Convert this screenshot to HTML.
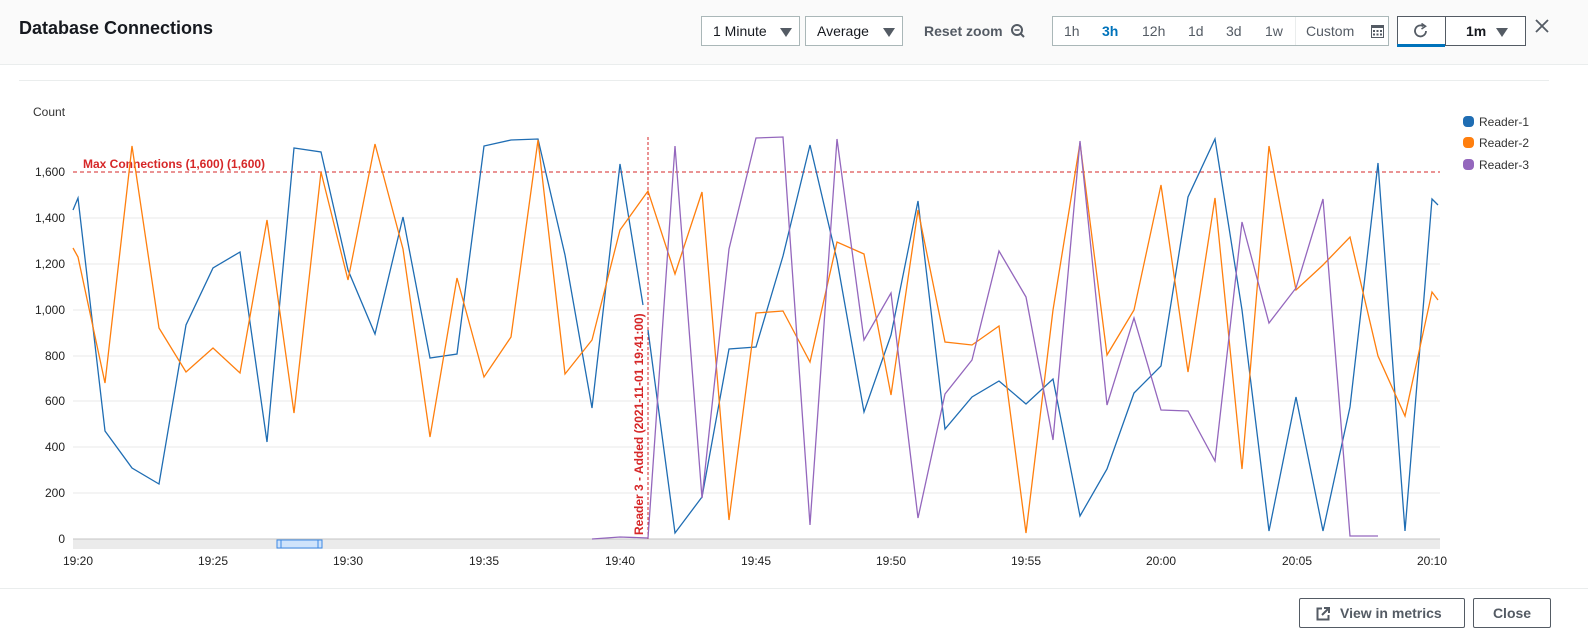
<!DOCTYPE html>
<html><head><meta charset="utf-8"><style>
*{box-sizing:border-box;margin:0;padding:0}
body{width:1588px;height:642px;background:#fff;font-family:"Liberation Sans",Arial,sans-serif;position:relative;overflow:hidden;color:#16191f}
.hdr{position:absolute;left:0;top:0;width:1588px;height:65px;background:#fafafa;border-bottom:1px solid #eaeded}
.t{position:absolute;left:19px;top:18px;font-size:18px;font-weight:bold}
.b{position:absolute;border:1px solid #aab7b8;background:#fff;height:30px;top:16px;font-size:14px;line-height:28px;color:#16191f}
.tri{position:absolute;top:11px;width:0;height:0;border-left:6px solid transparent;border-right:6px solid transparent;border-top:9px solid #545b64}
.seg{position:absolute;top:0;font-size:14px;line-height:28px;color:#545b64}
.foot{position:absolute;left:0;top:588px;width:1588px;border-top:1px solid #eaeded}
.fb{position:absolute;top:598px;height:30px;border:1px solid #545b64;border-radius:2px;font-size:14px;font-weight:bold;line-height:28px;color:#545b64;text-align:center}
</style></head><body>
<div class="hdr">
<div class="t">Database Connections</div>
<div class="b" style="left:701px;width:99px"><span style="position:absolute;left:11px">1 Minute</span><span class="tri" style="left:78px"></span></div>
<div class="b" style="left:805px;width:98px"><span style="position:absolute;left:11px">Average</span><span class="tri" style="left:77px"></span></div>
<div style="position:absolute;left:924px;top:23px;font-size:14px;font-weight:bold;color:#545b64">Reset zoom</div>
<svg style="position:absolute;left:1010px;top:23px" width="16" height="16"><circle cx="7" cy="7" r="5" fill="none" stroke="#545b64" stroke-width="2"/><line x1="4.5" y1="7" x2="9.5" y2="7" stroke="#545b64" stroke-width="1.6"/><line x1="10.5" y1="10.5" x2="14" y2="14" stroke="#545b64" stroke-width="2"/></svg>
<div class="b" style="left:1052px;width:337px">
<span class="seg" style="left:11px">1h</span>
<span class="seg" style="left:49px;color:#0073bb;font-weight:bold">3h</span>
<span class="seg" style="left:89px">12h</span>
<span class="seg" style="left:135px">1d</span>
<span class="seg" style="left:173px">3d</span>
<span class="seg" style="left:212px">1w</span>
<span style="position:absolute;left:242px;top:0;height:28px;border-left:1px solid #eaeded"></span>
<span class="seg" style="left:253px">Custom</span>
<svg style="position:absolute;left:318px;top:8px" width="13" height="13"><rect x="0.5" y="0.5" width="12" height="12" fill="none" stroke="#545b64"/><rect x="0" y="0" width="13" height="3" fill="#545b64"/><g fill="#545b64"><rect x="2" y="5" width="2" height="2"/><rect x="5.5" y="5" width="2" height="2"/><rect x="9" y="5" width="2" height="2"/><rect x="2" y="8.5" width="2" height="2"/><rect x="5.5" y="8.5" width="2" height="2"/><rect x="9" y="8.5" width="2" height="2"/></g></svg>
</div>
<div class="b" style="left:1397px;width:129px;border-color:#545b64">
<span style="position:absolute;left:47px;top:0;height:28px;border-left:1px solid #545b64"></span>
<svg style="position:absolute;left:15px;top:6px" width="16" height="16"><path d="M13 8 A5.5 5.5 0 1 1 10.5 3.3" fill="none" stroke="#545b64" stroke-width="1.8"/><path d="M8.5 0.5 L12.5 3.3 L8.5 6" fill="none" stroke="#545b64" stroke-width="1.6"/></svg>
<span style="position:absolute;left:68px;font-weight:bold">1m</span><span class="tri" style="left:98px"></span>
<span style="position:absolute;left:-1px;bottom:-2px;width:48px;height:3px;background:#0073bb"></span>
</div>
<svg style="position:absolute;left:1534px;top:18px" width="16" height="16"><path d="M2 2 L14 14 M14 2 L2 14" stroke="#545b64" stroke-width="1.8"/></svg>
</div>
<div style="position:absolute;left:19px;top:80px;width:1530px;border-top:1px solid #eaeded"></div>
<svg style="position:absolute;left:0;top:0" width="1588" height="642" font-family="Liberation Sans,Arial,sans-serif">
<text x="33" y="116" font-size="12" fill="#333">Count</text>
<g stroke="#e9e9e9" stroke-width="1">
<line x1="73" y1="218" x2="1440" y2="218"/><line x1="73" y1="264" x2="1440" y2="264"/><line x1="73" y1="310" x2="1440" y2="310"/><line x1="73" y1="356" x2="1440" y2="356"/><line x1="73" y1="401" x2="1440" y2="401"/><line x1="73" y1="447" x2="1440" y2="447"/><line x1="73" y1="493" x2="1440" y2="493"/>
</g>
<g font-size="12" fill="#222" text-anchor="end">
<text x="65" y="176">1,600</text><text x="65" y="222">1,400</text><text x="65" y="268">1,200</text><text x="65" y="314">1,000</text><text x="65" y="360">800</text><text x="65" y="405">600</text><text x="65" y="451">400</text><text x="65" y="497">200</text><text x="65" y="543">0</text>
</g>
<rect x="73" y="539" width="1367" height="10" fill="#ebebeb"/>
<line x1="73" y1="539" x2="1440" y2="539" stroke="#c4c4c4"/>
<rect x="277" y="540" width="45" height="8" fill="#cfe3fb" stroke="#3c8ae5"/>
<rect x="277" y="540" width="4" height="8" fill="#cfe3fb" stroke="#3c8ae5"/><rect x="318" y="540" width="4" height="8" fill="#cfe3fb" stroke="#3c8ae5"/>
<g font-size="12" fill="#222" text-anchor="middle">
<text x="78" y="565">19:20</text><text x="213" y="565">19:25</text><text x="348" y="565">19:30</text><text x="484" y="565">19:35</text><text x="620" y="565">19:40</text><text x="756" y="565">19:45</text><text x="891" y="565">19:50</text><text x="1026" y="565">19:55</text><text x="1161" y="565">20:00</text><text x="1297" y="565">20:05</text><text x="1432" y="565">20:10</text>
</g>
<line x1="73" y1="172" x2="1440" y2="172" stroke="#d62728" stroke-dasharray="4,3"/>
<text x="83" y="168" font-size="12" font-weight="bold" fill="#d62728">Max Connections (1,600) (1,600)</text>
<line x1="648" y1="137" x2="648" y2="539" stroke="#d62728" stroke-dasharray="3,2"/>
<text transform="translate(643,535) rotate(-90)" font-size="12" font-weight="bold" fill="#d62728">Reader 3 - Added (2021-11-01 19:41:00)</text>
<g fill="none" stroke-width="1.3">
<polyline stroke="#1f6db3" points="73,210 78,198 105,431 132,468 159,484 186,325 213,268 240,252 267,442 294,148 321,152 348,270 375,334 403,217 430,358 457,354 484,146 511,140 538,139 565,255 592,408 620,164 643,305"/>
<polyline stroke="#1f6db3" points="648,330 675,533 702,497 729,349 756,347 783,256 810,145 837,260 864,412 891,335 918,201 945,429 972,397 999,381 1026,404 1053,379 1080,516 1107,469 1134,393 1161,366 1188,197 1215,139 1242,310 1269,531 1296,397 1323,531 1350,407 1378,163 1405,531 1432,199 1438,205"/>
<polyline stroke="#ff7f0e" points="73,248 78,257 105,383 132,146 159,328 186,372 213,348 240,373 267,220 294,413 321,172 348,280 375,144 403,249 430,437 457,278 484,377 511,337 538,140 565,374 592,340 620,230 648,191 675,274 702,192 729,520 756,313 783,311 810,362 837,242 864,254 891,395 918,210 945,342 972,345 999,326 1026,533 1053,310 1080,143 1107,355 1134,310 1161,185 1188,372 1215,198 1242,469 1269,146 1296,290 1323,265 1350,237 1378,356 1405,416 1432,292 1438,300"/>
<polyline stroke="#9467bd" points="592,539 620,537 648,538 675,146 702,498 729,249 756,138 783,137 810,525 837,139 864,340 891,293 918,518 945,394 972,360 999,251 1026,297 1053,440 1080,141 1107,405 1134,318 1161,410 1188,411 1215,461 1242,222 1269,323 1296,288 1323,199 1350,536 1378,536"/>
</g>
<rect x="1463" y="116" width="11" height="11" rx="4" fill="#1f6db3"/><text x="1479" y="126" font-size="12" fill="#333">Reader-1</text>
<rect x="1463" y="137" width="11" height="11" rx="4" fill="#ff7f0e"/><text x="1479" y="147" font-size="12" fill="#333">Reader-2</text>
<rect x="1463" y="159" width="11" height="11" rx="4" fill="#9467bd"/><text x="1479" y="169" font-size="12" fill="#333">Reader-3</text>
</svg>
<div class="foot"></div>
<div class="fb" style="left:1299px;width:166px"><svg style="position:absolute;left:16px;top:8px" width="14" height="14"><path d="M6 1.5 H1.5 V12.5 H12.5 V8" fill="none" stroke="#545b64" stroke-width="2"/><path d="M8 1 H13 V6 M13 1 L6 8" fill="none" stroke="#545b64" stroke-width="2"/></svg><span style="position:absolute;left:40px">View in metrics</span></div>
<div class="fb" style="left:1473px;width:78px">Close</div>
</body></html>
